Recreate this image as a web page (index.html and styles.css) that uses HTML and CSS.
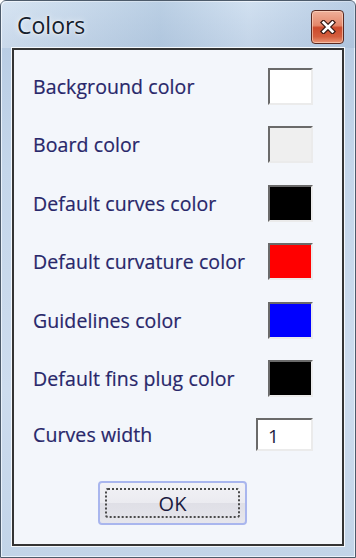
FILE: index.html
```html
<!DOCTYPE html>
<html lang="en">
<head>
    <meta charset="UTF-8">
    <meta name="viewport" content="width=device-width, initial-scale=1.0">
    <title>Colors</title>
    <link rel="stylesheet" href="styles.css">
</head>
<body>
    <div class="window">
        <div class="titlebar">
            <span class="title">Colors</span>
            <button class="close" title="Close">
                <svg width="16" height="14" viewBox="0 0 16 14">
                    <path d="M3.5 2.5 L12.5 11.5 M12.5 2.5 L3.5 11.5" stroke="#3a1a14" stroke-width="5" stroke-linecap="square"/>
                    <path d="M3.5 2.5 L12.5 11.5 M12.5 2.5 L3.5 11.5" stroke="#ffffff" stroke-width="2.6" stroke-linecap="square"/>
                </svg>
            </button>
        </div>

        <div class="panel">
            <div class="rows">
                <div class="row">
                    <span class="label">Background color</span>
                    <span class="swatch" style="background: #ffffff;"></span>
                </div>
                <div class="row">
                    <span class="label">Board color</span>
                    <span class="swatch" style="background: #efefef;"></span>
                </div>
                <div class="row">
                    <span class="label">Default curves color</span>
                    <span class="swatch" style="background: #000000;"></span>
                </div>
                <div class="row">
                    <span class="label">Default curvature color</span>
                    <span class="swatch" style="background: #ff0000;"></span>
                </div>
                <div class="row">
                    <span class="label">Guidelines color</span>
                    <span class="swatch" style="background: #0000ff;"></span>
                </div>
                <div class="row">
                    <span class="label">Default fins plug color</span>
                    <span class="swatch" style="background: #000000;"></span>
                </div>
                <div class="row">
                    <span class="label label-up">Curves width</span>
                    <input class="width-input" type="text" value="1">
                </div>
            </div>

            <button class="ok"><span class="focus">OK</span></button>
        </div>
    </div>
</body>
</html>
```

FILE: styles.css
```css
html, body {
    margin: 0;
    padding: 0;
}
body {
    width: 356px;
    height: 558px;
    overflow: hidden;
    font-family: "Open Sans", "Noto Sans", sans-serif;
}
.window {
    box-sizing: border-box;
    width: 356px;
    height: 558px;
    display: flex;
    flex-direction: column;
    border: 1px solid #4d5b6b;
    border-radius: 6px 6px 0 0;
    background: linear-gradient(to bottom, #c9dbee 0%, #b9cde4 8%, #c4d6ea 30%, #cddcee 70%, #c2d4e8 100%);
    box-shadow: inset 1px 1px 0 #e9f1fa, inset -1px -1px 0 #e9f1fa;
}
.titlebar {
    height: 47px;
    display: flex;
    align-items: flex-start;
    justify-content: space-between;
    padding: 0 11px 0 16px;
    background: linear-gradient(to right, rgba(255,255,255,0.25), rgba(160,185,210,0.35) 45%, rgba(255,255,255,0.15) 70%, rgba(150,175,205,0.3));
}
.title {
    margin-top: 8px;
    font-size: 23px;
    color: #15202c;
    text-shadow: 0 0 6px rgba(255, 255, 255, 0.9), 0 0 2px #ffffff;
}
.close {
    margin-top: 9px;
    width: 33px;
    height: 34px;
    padding: 0;
    display: flex;
    align-items: center;
    justify-content: center;
    border: 1px solid #5a2a22;
    border-radius: 4px;
    background: linear-gradient(to bottom, #efb09a 0%, #e4876a 45%, #cc4a2c 52%, #d45e3e 80%, #ea9676 100%);
    box-shadow: inset 0 0 0 1px rgba(255, 220, 200, 0.6);
}
.panel {
    flex: 1;
    margin: 0 11px 11px 11px;
    display: flex;
    flex-direction: column;
    border: 2px solid #343434;
    background: #f3f6fb;
    box-shadow: 0 0 0 1px #f4f8fc;
}
.rows {
    display: flex;
    flex-direction: column;
    gap: 21.4px;
    padding: 18px 29px 0 19px;
}
.row {
    height: 37px;
    display: flex;
    align-items: center;
    justify-content: space-between;
}
.label {
    font-size: 19.5px;
    color: #28276a;
    letter-spacing: 0.1px;
    -webkit-text-stroke: 0.2px #28276a;
}
.label-up {
    margin-top: -4px;
}
.swatch {
    box-sizing: border-box;
    width: 45px;
    height: 37px;
    border-top: 2px solid #6a6a6a;
    border-left: 2px solid #6a6a6a;
    border-right: 2px solid #ebebeb;
    border-bottom: 2px solid #ebebeb;
}
.width-input {
    box-sizing: border-box;
    width: 57px;
    height: 33px;
    margin-top: -4px;
    padding: 2px 0 0 10px;
    font-family: "Open Sans", "Noto Sans", sans-serif;
    font-size: 19px;
    color: #1c1c40;
    background: #ffffff;
    border-top: 2px solid #6a6a6a;
    border-left: 2px solid #6a6a6a;
    border-right: 2px solid #ebebeb;
    border-bottom: 2px solid #ebebeb;
    outline: none;
}
.ok {
    margin: 26px 0 0 84px;
    width: 149px;
    height: 44px;
    padding: 5px;
    border: 2px solid #a9b6ee;
    border-radius: 4px;
    background: linear-gradient(to bottom, #f2f2f6 0%, #ebebf0 50%, #dfdfe6 51%, #e6e6ec 100%);
    cursor: pointer;
}
.focus {
    display: flex;
    align-items: center;
    justify-content: center;
    height: 100%;
    box-sizing: border-box;
    border: 2px dotted #4a4a4a;
    border-radius: 3px;
    font-family: "Open Sans", "Noto Sans", sans-serif;
    font-size: 20px;
    color: #1a1a40;
}
```
